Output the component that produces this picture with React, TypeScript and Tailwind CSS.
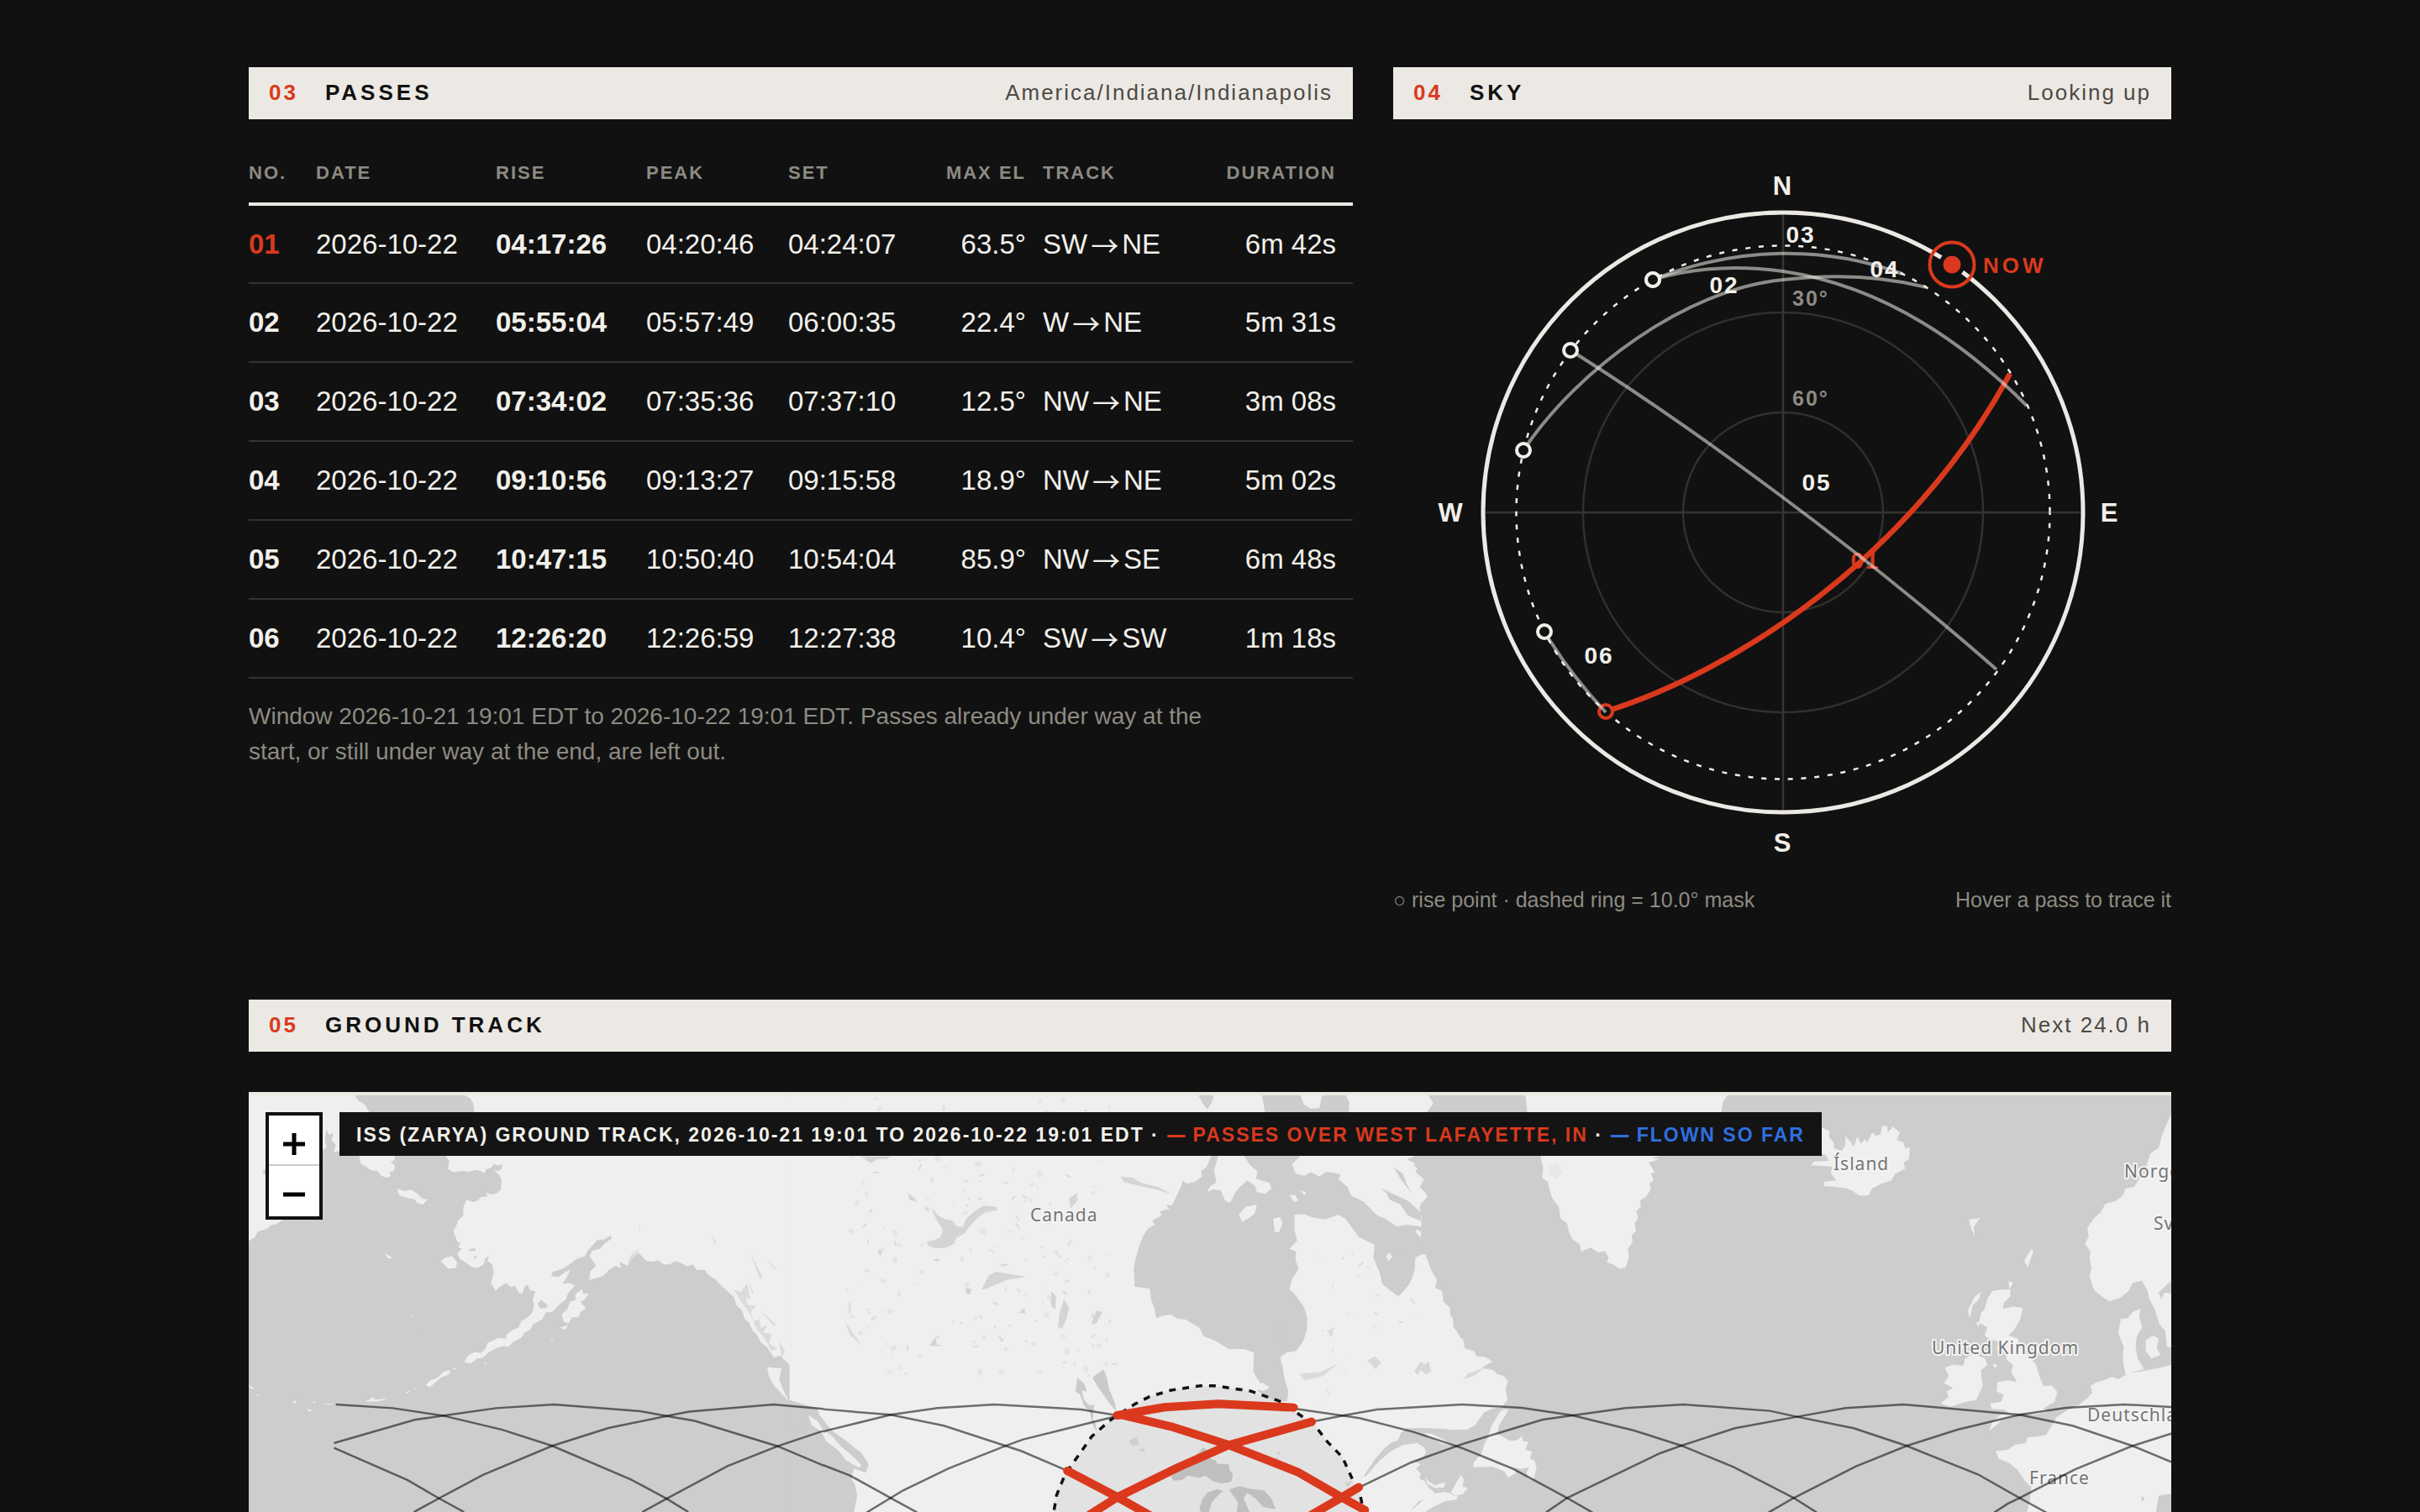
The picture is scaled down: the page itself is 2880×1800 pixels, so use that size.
import type { ReactNode } from "react";

const passes = [
    { no: "01", date: "2026-10-22", rise: "04:17:26", peak: "04:20:46", set: "04:24:07", maxEl: "63.5°", from: "SW", to: "NE", duration: "6m 42s" },
    { no: "02", date: "2026-10-22", rise: "05:55:04", peak: "05:57:49", set: "06:00:35", maxEl: "22.4°", from: "W", to: "NE", duration: "5m 31s" },
    { no: "03", date: "2026-10-22", rise: "07:34:02", peak: "07:35:36", set: "07:37:10", maxEl: "12.5°", from: "NW", to: "NE", duration: "3m 08s" },
    { no: "04", date: "2026-10-22", rise: "09:10:56", peak: "09:13:27", set: "09:15:58", maxEl: "18.9°", from: "NW", to: "NE", duration: "5m 02s" },
    { no: "05", date: "2026-10-22", rise: "10:47:15", peak: "10:50:40", set: "10:54:04", maxEl: "85.9°", from: "NW", to: "SE", duration: "6m 48s" },
    { no: "06", date: "2026-10-22", rise: "12:26:20", peak: "12:26:59", set: "12:27:38", maxEl: "10.4°", from: "SW", to: "SW", duration: "1m 18s" },
];

// Sky positions, relative to the zenith. Horizon radius is 357.
const arcs = [
    { no: "02", label: [-70, -261], start: [-309, -74], d: "M-309-74C-245-170-115-266 0-277C60-284 120-281 170-268" },
    { no: "03", label: [21, -321], start: [-155, -277], d: "M-155-277C-55-317 50-318 142-284" },
    { no: "04", label: [121, -280], start: [-155, -277], d: "M-155-277C-105-292-50-294 0-287C110-271 205-212 290-127" },
    { no: "05", label: [40, -26], start: [-253, -193], d: "M-253-193C-110-103 90 43 254 187" },
    { no: "06", label: [-219, 180], start: [-284, 142], d: "M-284 142Q-254 192-211 238" },
];

function SectionBar({ no, title, note }: { no: string; title: string; note: string }) {
    return (
        <header className="flex h-[62px] items-start bg-[#ece9e4] px-6 py-3 text-[26px] leading-9 text-[#111111]">
            <span className="mr-8 font-bold tracking-[3px] text-[#da391d]">{no}</span>
            <h2 className="font-bold tracking-[4px]">{title}</h2>
            <span className="ml-auto tracking-[2px] text-[#4d4a45]">{note}</span>
        </header>
    );
}

function PassTable() {
    return (
        <table className="mt-[44px] w-full table-fixed border-collapse text-left whitespace-nowrap">
            <colgroup>
                <col className="w-[80px]" />
                <col className="w-[214px]" />
                <col className="w-[179px]" />
                <col className="w-[169px]" />
                <col className="w-[165px]" />
                <col className="w-[138px]" />
                <col className="w-[200px]" />
                <col className="w-[169px]" />
            </colgroup>
            <thead>
                <tr className="h-[57px] border-b-4 border-[#ece9e4] align-top text-[22px] leading-10 tracking-[2px] text-[#8d8b82]">
                    <th scope="col">NO.</th>
                    <th scope="col">DATE</th>
                    <th scope="col">RISE</th>
                    <th scope="col">PEAK</th>
                    <th scope="col">SET</th>
                    <th scope="col" className="pr-5 text-right">MAX EL</th>
                    <th scope="col">TRACK</th>
                    <th scope="col" className="pr-5 text-right">DURATION</th>
                </tr>
            </thead>
            <tbody className="text-[33px] leading-10">
                {passes.map((pass, i) => (
                    <tr key={pass.no} className="h-[94px] border-b-2 border-[#333331]">
                        <th scope="row" className={i === 0 ? "font-bold text-[#da391d]" : "font-bold"}>{pass.no}</th>
                        <td>{pass.date}</td>
                        <td className="font-bold">{pass.rise}</td>
                        <td>{pass.peak}</td>
                        <td>{pass.set}</td>
                        <td className="pr-5 text-right">{pass.maxEl}</td>
                        <td>
                            <span className="flex items-center gap-1">
                                {pass.from}
                                <span className="font-['Noto_Sans_CJK_JP']">→</span>
                                {pass.to}
                            </span>
                        </td>
                        <td className="pr-5 text-right">{pass.duration}</td>
                    </tr>
                ))}
            </tbody>
        </table>
    );
}

function SkyChart() {
    return (
        <svg viewBox="-421 -420 840 840" className="mx-auto mt-12 block w-full max-w-[840px] overflow-visible" role="img" aria-label="Sky chart">
            <g fill="none" stroke="#30302d" strokeWidth="2.5">
                <circle r="119" />
                <circle r="238" />
                <path d="M-357 0H357M0-357V357" stroke="#353532" />
            </g>
            <circle r="317.5" fill="none" stroke="#f2f0eb" strokeWidth="2.5" strokeDasharray="6 9.8" strokeDashoffset="3" />
            <circle r="357" fill="none" stroke="#ece9e4" strokeWidth="5" />

            <g fill="#8d8b82" className="text-[25px] font-bold tracking-[2px]">
                <text x="11" y="-246">30°</text>
                <text x="11" y="-127">60°</text>
            </g>
            <g fill="#f2f0eb" textAnchor="middle" className="text-[31px] font-bold">
                <text x="-1" y="-378">N</text>
                <text x="388" y="11">E</text>
                <text x="-1" y="404">S</text>
                <text x="-396" y="11">W</text>
            </g>

            <text x="98" y="67" textAnchor="middle" fill="#da391d" className="text-[28px] font-bold tracking-[2px]">01</text>
            <path d="M-211 237C-60 190 150 56 270-165" fill="none" stroke="#da391d" strokeWidth="6.5" />
            <circle cx="-211" cy="237" r="8" fill="#111111" stroke="#da391d" strokeWidth="4" />

            {arcs.map((arc) => (
                <g key={arc.no}>
                    <path d={arc.d} fill="none" stroke="#f2f0eb" strokeOpacity="0.55" strokeWidth="4" />
                    <circle cx={arc.start[0]} cy={arc.start[1]} r="8" fill="#111111" stroke="#f2f0eb" strokeWidth="4" />
                </g>
            ))}
            {arcs.map((arc) => (
                <text key={arc.no} x={arc.label[0]} y={arc.label[1]} textAnchor="middle" fill="#f2f0eb" className="text-[28px] font-bold tracking-[2px]">{arc.no}</text>
            ))}

            <circle cx="201" cy="-295" r="26.5" fill="none" stroke="#da391d" strokeWidth="4" />
            <circle cx="201" cy="-295" r="13" fill="#da391d" stroke="#111111" strokeWidth="5" />
            <text x="238" y="-285" fill="#da391d" className="text-[26px] font-bold tracking-[4px]">NOW</text>
        </svg>
    );
}

// Each sheet of the base map is digitised on its own grid.
const SHEET_WEST = "translate(-16 -140) scale(0.4464 0.4082)";
const SHEET_CANADA = "translate(664 -20) scale(0.5102 0.3333)";
const SHEET_ATLANTIC = "translate(1444 -20) scale(0.5483 0.3333)";
const SHEET_GULF = "translate(1324 300) scale(0.3333)";
const SHEET_LAKES = "translate(884 340) scale(0.3333)";

// Small lakes scattered over the Canadian shield
const ponds = Array.from({ length: 190 }, (_, i) => {
    const rx = (Math.sin(i * 12.9898) * 43758.5453) % 1;
    const ry = (Math.sin(i * 78.233) * 12543.123) % 1;
    return {
        x: Math.round(710 + Math.abs(rx) * 320),
        y: Math.round(8 + Math.abs(ry) * 330),
        w: 1 + ((i * 7) % 3),
        h: 1 + ((i * 5) % 4),
        turn: (i * 37) % 180,
    };
}).concat(
    Array.from({ length: 50 }, (_, i) => ({
        x: Math.round(1268 + Math.abs((Math.sin(i * 4.1414) * 9631.77) % 1) * 150),
        y: Math.round(190 + Math.abs((Math.sin(i * 9.73) * 7753.31) % 1) * 190),
        w: 1 + ((i * 3) % 3),
        h: 1 + ((i * 5) % 4),
        turn: (i * 53) % 180,
    })),
);

function Track({ points }: { points: string }) {
    return <polyline points={points} vectorEffect="non-scaling-stroke" />;
}

function BaseMap() {
    return (
        <g>
            <g transform={SHEET_WEST} fill="#efefef">
                <path d="M36 352H318L330 370 344 378 352 392 358 402 300 470 278 515 262 518 268 498 256 482 263 462 250 468 243 452 239 485 243 505 233 512 190 680 150 710 128 715 110 728 95 732 84 742 60 750 52 766 36 778Z" />
                <path d="M330 529H426L424 542 414 548 426 558 423 574 412 576 414 590 400 592 388 586 380 574 360 570 348 560 335 553Z" />
                <path d="M610 352 625 360 634 375 637 402V500L562 529 570 545 567 568 580 577 602 573 622 576 640 570 654 573 664 580 670 568 684 562 688 553 703 558 711 552 711 566 700 574 688 571 704 584 710 600 708 628 698 638 680 642 669 636 672 648 655 650 645 661 632 664 616 657 608 680 608 704 594 718 588 736 581 748 586 762 592 780 600 782 594 795 604 800 592 815 600 832 612 838 630 854 645 856 662 846 666 830 676 820 672 836 685 846 689 870 682 900 694 923 704 912 722 900 735 912 745 908 756 928 765 932 770 914 778 904 786 920 800 925 793 950 797 968 790 990 775 1003 762 1012 755 1030 740 1036 724 1050 722 1062 700 1060 690 1066 672 1075 668 1090 655 1104 638 1102 620 1112 610 1132 628 1134 645 1120 660 1118 676 1102 696 1090 712 1084 728 1086 744 1070 762 1060 772 1044 786 1036 795 1020 818 1006 828 986 845 984 866 960 880 950 887 930 905 908 893 900 872 902 884 884 893 862 880 868 862 882 842 880 846 868 872 858 888 848 910 830 932 822 938 808 964 776 985 772 1000 762 1004 770 984 786 972 800 952 806 944 822 954 836 962 850 946 866 944 892 960 886 980 880 996 862 1012 850 1030 856 1024 838 1046 850 1060 828 1076 812 1096 836 1112 838 1128 834 1142 846 1158 846 1172 836 1190 842 1204 852 1220 846 1230 862 1252 862 1260 875 1280 890 1300 912 1330 942 1336 966 1350 978 1358 1004 1370 1016 1380 1040 1392 1052 1400 1072 1420 1090 1436 1118 1452 1112 1470 1130 1482 1142 1490 1176 1512 1200 1530 1225 1545 1234 1562 1268 1600 1300V352Z" />
                <path d="M1418 1145 1456 1149 1450 1180 1462 1215 1476 1246 1456 1222 1434 1196 1422 1170Z" />
                <path d="M870 992 886 975 893 955 908 950 906 934 924 918 928 932 942 930 932 948 920 955 935 975 920 985 915 1000 898 1000 888 1018 876 1014Z" />
                <path d="M431 624 450 632 468 628 486 640 498 654 513 656 500 671 484 666 478 656 460 652 438 645Z" />
                <path d="M547 836 560 826 578 822 592 840 588 856 568 858Z" />
                <path d="M398 814 410 820 420 828 408 828ZM508 1198 520 1184 540 1176 556 1158 574 1154 570 1166 548 1176 534 1190 518 1204ZM345 1246 358 1240 366 1232 372 1240 405 1237 388 1244 366 1246ZM36 1198 52 1207 40 1208ZM152 1246 165 1242 158 1252ZM190 1268 206 1270 198 1275ZM205 1248 216 1246 210 1251ZM236 1252 262 1252 250 1255ZM455 1218 466 1214 460 1222ZM476 1206 486 1208 480 1211ZM580 1150 592 1145 586 1152ZM866 1030 888 1022 878 1036ZM470 996 475 996 473 1000ZM486 1024 492 1028 488 1028ZM842 1062 848 1064 844 1068ZM56 1226 66 1226 60 1230ZM730 1098 752 1108 740 1102ZM662 1132 672 1134 666 1137Z" />
                <g fill="#cdcdcd">
                    <path d="M74 570 86 568 86 582 76 584ZM806 960 816 950 834 965 826 974 812 974ZM622 802 640 798 640 806 626 808ZM636 824 642 820 642 832Z" />
                    <path d="M1045 850 1052 825 1066 800 1060 820 1076 798 1070 826 1054 850ZM1330 920 1348 926 1364 900 1374 950 1360 940 1366 964 1388 966 1374 985 1382 1012 1396 1005 1402 1030 1418 1022 1408 1044 1430 1050 1424 1076 1446 1092 1430 1098 1410 1060 1388 1030 1372 990 1346 950ZM1366 886 1382 932 1378 934ZM1268 762 1284 782 1280 786ZM1372 810 1386 840 1406 884 1398 888 1386 850ZM1410 820 1442 860 1438 862ZM1398 976 1440 1020 1436 1026ZM1450 1070 1466 1100 1456 1118ZM1078 732 1080 748 1076 748Z" opacity=".6" />
                </g>
            </g>

            <g transform={SHEET_CANADA}>
                <path fill="#efefef" d="M-40 72H1450L1462 100 1448 130 1420 288 1400 300 1428 322 1420 345 1446 380 1440 410 1450 440 1430 470 1440 560 1436 600 1446 650 1458 700 1470 730 1466 760 1482 770 1486 810 1500 830 1502 860 1512 870 1508 900 1528 930 1536 962H1290V1562H110L118 1500 112 1460 104 1440 110 1405 138 1420 145 1390 128 1350 95 1310 60 1270 30 1215 25 1190 -40 1160Z" />
                <path fill="#efefef" d="M4 1214 24 1232 36 1262 60 1290 80 1326 104 1356 128 1392 122 1402 92 1376 74 1340 46 1308 34 1272 12 1250Z" />
                <g fill="#cdcdcd">
                    <path d="M-40 1162 0 1200 22 1220 20 1232 2 1208 -40 1200ZM-40 1240 34 1276 44 1310 72 1345 92 1380 108 1400 104 1444 114 1500 108 1562H-40Z" />
                    <path d="M914 72H950L944 100 934 122 922 96ZM1062 72H1156L1160 104 1176 120 1196 116 1202 72H1258L1266 96 1264 140H1070Z" />
                    <path d="M944 288 932 330 920 340 922 362 905 382 886 388 878 376 872 402 860 440 852 466 838 462 846 478 824 486 828 500 806 520 812 534 796 548 785 574 776 610 768 650 763 690 765 755 800 762 804 806 811 828 815 868 832 858 850 855 866 870 884 872 900 888 915 900 926 932 950 946 985 978 1020 978 1043 990 1042 1060 1060 1106 1052 1128 1070 1150 1088 1158 1120 1166 1124 1130 1114 1080 1110 1040 1104 1008 1120 990 1142 985 1158 950 1166 915 1168 866 1160 828 1140 785 1126 765 1132 730 1148 690 1140 660 1142 630 1126 620 1144 592 1138 555 1138 498 1160 496 1180 508 1210 515 1240 498 1256 512 1280 560 1288 578 1325 606 1322 650 1338 712 1342 745 1362 770 1380 790 1394 768 1408 740 1418 700 1420 650 1436 640H1460V560L1430 540 1400 534 1376 540 1350 512 1330 500 1300 452 1270 430 1262 400 1240 372 1246 354 1212 344 1196 362 1176 346 1160 360 1140 350 1132 318 1152 288H1020L1034 320 1052 345 1048 370 1080 385 1084 405 1070 424 1050 418 1046 395 1028 376 1010 400 998 424 988 456 976 448 966 412 948 408 934 418 942 396 956 384 950 340 960 288Z" />
                    <path d="M1338 402 1352 420 1360 445 1385 462 1402 500 1430 520 1440 500 1404 450 1376 430ZM1370 330 1390 350 1400 390 1410 420 1385 370ZM1440 288H1580V1010L1536 962 1510 900 1502 830 1486 770 1470 730 1446 650 1434 560 1432 460 1452 430 1430 400 1444 360 1416 320Z" />
                    <path d="M290 470 306 500 320 512 340 520 350 540 365 542 372 512 392 486 412 466 442 470 444 482 420 486 402 505 380 540 368 566 350 580 345 600 326 616 300 618 284 610 280 595 296 590 312 578 318 552 304 520ZM126 290H196L186 300 165 300 150 314 136 300ZM408 766 424 716 440 702 466 708 512 720 470 730 450 742 420 762ZM370 756 385 766 380 784 372 780ZM732 362 760 366 780 384 820 400 850 424 820 410 780 396 740 382ZM612 440 632 420 628 455 616 474ZM236 420 252 440 258 452 240 445ZM586 900 590 850 600 800 612 830 606 870 596 906ZM570 770 582 790 580 836 570 826ZM664 890 676 840 690 846 676 886ZM494 850 508 832 510 850ZM164 630 176 628 172 646ZM292 660 312 654 306 666ZM445 925 458 945 464 928 456 955ZM286 966 300 936 304 962 320 968Z" opacity=".8" />
                    <path d="M90 880 108 920 132 978 118 950 100 926ZM1095 900 1106 880 1118 930 1100 944ZM1302 1430 1330 1374 1380 1310 1336 1384ZM1150 1066 1200 1060 1240 1030 1202 1076 1160 1090ZM1304 1010 1326 985 1346 1020 1320 1040ZM1420 1050 1440 1010 1452 1040 1430 1078ZM1214 915 1230 900 1226 930Z" opacity=".6" />
                </g>
                <path fill="#efefef" d="M1008 498 1024 470 1050 462 1046 492 1030 512 1016 524ZM1088 512 1104 506 1110 530 1102 560 1092 560ZM1126 428 1140 428 1146 448 1136 452ZM1150 410 1164 418 1162 430ZM1352 645 1360 632 1366 650 1356 664ZM1424 550 1434 560 1432 580 1420 560ZM1152 72H1202L1196 106 1180 116 1160 104ZM1048 1104 1064 1098 1080 1116 1064 1128 1050 1120Z" />
            </g>

            <g fill="#d4d4d4">
                {ponds.map((p, i) => (
                    <ellipse key={i} cx={p.x} cy={p.y} rx={p.w} ry={p.h} opacity={i % 3 === 0 ? 0.8 : 0.4} transform={`rotate(${p.turn} ${p.x} ${p.y})`} />
                ))}
            </g>

            <g transform={SHEET_ATLANTIC} fill="#efefef">
                <path d="M138 72H575L566 96 562 140 430 288 412 296 428 300 405 312 418 345 410 352 416 376 406 386 410 408 398 436 386 448 388 470 378 486 382 510 374 530 378 556 368 572 370 596 360 620 362 650 355 686 342 692 328 676 314 668 318 650 310 628 296 634 280 616 270 622 258 630 256 606 240 586 232 560 228 530 214 512 210 470 196 440 190 410 186 380 174 368 176 330 170 288 145 200Z" />
                <path d="M778 184 798 200 796 220 806 240 808 262 824 270 832 250 832 218 844 240 850 256 858 220 866 245 874 228 880 240 890 204 898 216 908 212 912 182 922 180 924 205 935 184 950 205 944 232 958 240 962 262 972 258 970 300 958 312 962 334 940 352 932 376 912 386 890 404 882 430 862 430 846 412 834 404 810 398 785 396 786 380 812 376 800 350 804 326 758 322 764 308 796 306 790 286 766 274 750 266 768 248 758 216 776 212Z" />
                <path d="M1539 140 1520 210 1512 260 1494 280 1486 320 1492 350 1470 370 1458 400 1440 404 1434 430 1418 450 1396 460 1386 490 1372 510 1357 545 1360 575 1352 602 1364 630 1362 655 1366 690 1362 720 1372 768 1390 792 1405 808 1428 796 1446 772 1456 742 1475 734 1488 770 1492 800 1504 838 1514 890 1526 912 1530 970 1539 972Z" />
                <path d="M1539 1034 1510 1046 1480 1056 1445 1065 1425 1086 1410 1078 1398 1086 1376 1098 1364 1110 1368 1135 1354 1158 1340 1176 1310 1200 1290 1222 1280 1250 1268 1284 1250 1290 1226 1294 1224 1314 1200 1320 1184 1338 1158 1342 1164 1368 1190 1388 1206 1410 1222 1450 1236 1470 1232 1520 1226 1562H1506L1512 1502 1539 1494Z" />
                <path d="M1430 870 1445 868 1456 845 1472 834 1470 862 1476 900 1464 935 1462 970 1466 1010 1480 1050 1440 1068 1434 1020 1436 970 1424 920ZM1484 946 1500 930 1512 940 1508 975 1516 1000 1496 1012 1484 985Z" />
                <path d="M1150 772 1168 766 1190 765 1190 790 1176 812 1174 834 1196 826 1217 832 1212 870 1200 905 1186 930 1206 940 1214 985 1232 1005 1246 1034 1252 1070 1262 1110 1280 1108 1292 1132 1286 1166 1262 1190 1274 1202 1240 1212 1214 1206 1198 1222 1172 1232 1156 1254 1144 1272 1150 1240 1168 1212 1188 1206 1176 1194 1150 1192 1146 1172 1170 1166 1176 1140 1160 1130 1162 1096 1186 1090 1204 1096 1192 1060 1196 1036 1180 1012 1186 990 1160 982 1166 952 1148 946 1134 930 1140 900 1122 884 1126 850 1134 836 1140 800Z" />
                <path d="M1048 1044 1066 1034 1088 1038 1092 1012 1110 996 1134 1010 1140 1034 1126 1056 1130 1110 1116 1160 1090 1168 1060 1184 1038 1172 1056 1150 1052 1130 1066 1116 1046 1100 1056 1074Z" />
                <path d="M1100 516 1124 510 1110 544 1114 576 1106 552ZM1236 620 1240 628 1228 686 1220 662ZM1186 734 1196 742 1188 764ZM1112 792 1126 774 1122 800 1108 822 1102 868 1098 840ZM1116 884 1126 880 1120 900ZM1152 1030 1162 1036 1156 1048Z" />
                <g fill="#cdcdcd">
                    <path d="M1512 776 1528 750 1539 735V780L1524 776 1518 800ZM1352 1090 1358 1120 1350 1146ZM1474 1504 1482 1510 1476 1524Z" />
                    <path d="M186 320 206 316 220 345 204 372 190 352Z" opacity=".2" />
                </g>
            </g>

            <g transform={SHEET_GULF} fill="#efefef">
                <path fill="#cdcdcd" d="M130 120H900V600H0V470L60 380H130Z" />
                <path d="M-20-20H362L370 16 404 26 412 44 440 46 470 62 440 78 432 88 470 92 486 108 508 114 524 132 516 160 522 200 502 225 470 230 440 244 420 270 405 292 375 306 320 307 300 303 220 300 160 301 142 318 130 345 110 350 80 375 50 410 10 470-20 490Z" />
                <path d="M-20 490 10 472 30 455 64 418 104 384 150 360 200 354 224 368 232 386 222 402 190 420 212 430 196 445 212 462 208 480 226 490 240 512 262 530 240 550 205 562 190 580 172 602H-20Z" />
                <path d="M170 602 204 572 240 540 262 534 300 528 345 545 340 556 300 562 260 580 225 602ZM320 532 336 500 356 468 366 484 362 508 380 516 362 536 340 542ZM228 474 240 490 262 504 300 494 296 512 262 514 236 500ZM225 318 256 322 300 344 326 362 290 358 246 336Z" />
                <path d="M500 236 526 234 510 262 492 290 486 322 510 334 532 346 556 344 574 328 576 346 596 350 586 378 610 384 602 408 618 416 626 440 616 482 598 484 590 462 600 440 572 446 546 442 552 462 524 478 512 456 470 438 400 440 402 422 428 394 438 362 452 334 466 290Z" />
                <path fill="#cdcdcd" d="M366 126 380 106 404 98 440 84 430 92 408 110 384 120ZM190 96 212 64 228 74 240 60 250 98 230 108 212 92 200 112ZM22 60 48 44 72 66 50 90 36 72Z" opacity=".7" />
                <path fill="#cdcdcd" d="M12 468 34 436 62 398 96 366 130 346 140 352 104 382 64 416 34 452 14 474Z" />
            </g>

            <g transform={SHEET_LAKES} fill="#cacaca">
                <path d="M360 0 400-30 412 0 420 40 440 90 446 122 424 96 402 64 384 40ZM306 0 330 20 340 50 322 46 330 80 350 100 366 96 362 150 372 168 378 196 362 172 350 120 330 100 316 60 300 50Z" />
                <path d="M640 352 700 316 728 278 756 250 780 264 770 286 800 296 806 308 846 308 850 330 862 344 856 372 820 378 790 370 764 350 742 358 700 350 680 366 650 368Z" />
                <path d="M742 470 752 436 772 410 806 398 826 404 806 424 786 446 776 482H748ZM848 400 886 388 930 398 972 402 1000 432 1014 470 970 462 940 430 914 412 900 430 922 482H876L880 446Z" />
                <path d="M490 226 520 210 528 240 504 246ZM526 262 540 250 550 266ZM1020 260 1036 270 1024 276ZM1010 290 1024 284 1026 300ZM706 200 716 206 712 214ZM1260 374 1290 370 1270 392Z" opacity=".5" />
            </g>
        </g>
    );
}

function GroundMap() {
    return (
        <svg viewBox="0 4 2288 496" preserveAspectRatio="xMidYMin slice" className="block h-full w-full" role="img" aria-label="ISS ground track map">
            <rect width="2288" height="500" fill="#cdcdcd" />
            <BaseMap />

            <g fill="#757575" stroke="#f4f4f4" strokeWidth="4" strokeLinejoin="round" paintOrder="stroke" className="font-['Noto_Sans'] text-[21px] tracking-[1px]">
                <text x="930" y="154">Canada</text>
                <text x="1886" y="93">Ísland</text>
                <text x="2232" y="102">Norge</text>
                <text x="2267" y="164">Sverige</text>
                <text x="2003" y="312">United Kingdom</text>
                <text x="2188" y="392">Deutschland</text>
                <text x="2119" y="467">France</text>
            </g>

            <g fill="none" stroke="#000000" strokeOpacity="0.55" strokeWidth="2.5">
                <g transform={SHEET_WEST}>
                    <Track points="268,1254 420,1265 555,1287 712,1328 845,1375 1055,1473 1150,1529 1208,1568" />
                    <Track points="263,1367 478,1299 555,1287 695,1265 850,1254 1080,1274 1150,1288 1225,1302 1446,1376 1568,1432" />
                    <Track points="263,1381 460,1475 543,1528 610,1568" />
                    <Track points="476,1568 543,1528 660,1460 845,1375 995,1323 1150,1288 1210,1275 1435,1254 1568,1267" />
                    <Track points="1085,1568 1150,1529 1312,1434 1446,1376 1568,1331" />
                </g>
                <g transform={SHEET_CANADA}>
                    <Track points="39,1393 100,1429 196,1510 258,1562" />
                    <Track points="39,1193 196,1213 320,1252 500,1342 608,1413" />
                    <Track points="39,1273 50,1268 196,1213 305,1189 438,1176 640,1194 728,1216" />
                    <Track points="140,1562 196,1510 225,1483 330,1405 462,1325 505,1301 728,1216" />
                    <Track points="1142,1192 1250,1216 1290,1225 1415,1274 1516,1325 1529,1332" />
                    <Track points="1182,1237 1250,1216 1330,1194 1529,1176" />
                    <Track points="1292,1470 1410,1383 1516,1325 1529,1318" />
                </g>
                <g transform={SHEET_ATLANTIC}>
                    <Track points="0,1176 130,1188 240,1215 375,1270 476,1323 590,1400 720,1510 770,1562" />
                    <Track points="0,1318 175,1230 240,1215 355,1189 480,1176 668,1199 727,1220 850,1261 965,1324 1120,1426 1210,1510 1268,1562" />
                    <Track points="0,1332 110,1405 228,1510 283,1562" />
                    <Track points="182,1562 228,1510 430,1350 476,1323 592,1261 727,1220 832,1189 958,1176 1210,1213 1325,1252 1455,1324 1539,1381" />
                    <Track points="665,1562 720,1510 855,1397 965,1324 1075,1266 1210,1213 1310,1188 1437,1176 1539,1185" />
                    <Track points="1155,1562 1185,1530 1210,1510 1330,1408 1455,1324 1539,1280" />
                </g>
            </g>

            <g transform={SHEET_CANADA} fill="none">
                <polyline
                    points="572,1600 583,1500 603,1425 640,1345 665,1290 710,1230 765,1175 800,1148 850,1125 920,1109 950,1109 1035,1128 1110,1168 1150,1213 1185,1250 1215,1310 1250,1365 1275,1450 1290,1490 1304,1600"
                    vectorEffect="non-scaling-stroke" fill="#000000" fillOpacity="0.05" stroke="#111111" strokeWidth="3.5" strokeDasharray="8 8" strokeLinejoin="round"
                />
                <g stroke="#da391d" strokeWidth="10" strokeLinecap="round" strokeLinejoin="round">
                    <Track points="608,1413 725,1507 800,1572" />
                    <Track points="724,1215 835,1186 960,1174 1136,1187" />
                    <Track points="735,1213 850,1255 985,1321 1145,1417 1248,1508 1302,1553" />
                    <Track points="660,1570 725,1507 865,1402 985,1321 1178,1238" />
                    <Track points="1176,1572 1248,1508 1288,1472" />
                </g>
            </g>
        </svg>
    );
}

function ZoomButton({ label, children }: { label: string; children: ReactNode }) {
    return (
        <button type="button" aria-label={label} className="flex h-[60px] w-[60px] items-center justify-center bg-white pt-2 text-black">
            <svg viewBox="0 0 26 26" className="size-[26px]" stroke="currentColor" strokeWidth="5">
                {children}
            </svg>
        </button>
    );
}

function Dash() {
    return <span className="font-['Open_Sans'] font-extrabold tracking-normal">—</span>;
}

export default function App() {
    return (
        <div className="flex h-screen flex-col overflow-hidden bg-[#111111] pt-20 font-['Liberation_Sans',Arial,sans-serif] text-[#f2f0eb]">
            <main className="mx-auto flex min-h-0 w-full max-w-[2288px] flex-1 flex-col">
                <div className="grid grid-cols-[1314fr_926fr] gap-12">
                    <section>
                        <SectionBar no="03" title="PASSES" note="America/Indiana/Indianapolis" />
                        <PassTable />
                        <p className="mt-6 max-w-[1180px] text-[28px] leading-[42px] text-[#8d8b82]">
                            Window 2026-10-21 19:01 EDT to 2026-10-22 19:01 EDT. Passes already under way at the start, or still under way at the end, are left out.
                        </p>
                    </section>

                    <section>
                        <SectionBar no="04" title="SKY" note="Looking up" />
                        <SkyChart />
                        <div className="mt-5 flex justify-between text-[25px] leading-[42px] text-[#8d8b82]">
                            <span>○ rise point · dashed ring = 10.0° mask</span>
                            <span>Hover a pass to trace it</span>
                        </div>
                    </section>
                </div>

                <section className="mt-[98px] flex min-h-0 flex-1 flex-col">
                    <SectionBar no="05" title="GROUND TRACK" note="Next 24.0 h" />
                    <div className="relative mt-12 min-h-0 flex-1 border-t-4 border-[#ece9e4]">
                        <GroundMap />
                        <div className="absolute top-5 left-5 flex items-start gap-5">
                            <div className="border-4 border-[#111111]">
                                <div className="h-[60px] overflow-hidden border-b-2 border-[#cccccc]">
                                    <ZoomButton label="Zoom in"><path d="M0 13H26M13 0V26" /></ZoomButton>
                                </div>
                                <ZoomButton label="Zoom out"><path d="M0 13H26" /></ZoomButton>
                            </div>
                            <p className="h-[52px] bg-[#141414] px-5 text-[23px] leading-[52px] font-bold tracking-[2px] whitespace-nowrap">
                                ISS (ZARYA) GROUND TRACK, 2026-10-21 19:01 TO 2026-10-22 19:01 EDT · <span className="text-[#da391d]"><Dash /> PASSES OVER WEST LAFAYETTE, IN</span> · <span className="text-[#2f6fe0]"><Dash /> FLOWN SO FAR</span>
                            </p>
                        </div>
                    </div>
                </section>
            </main>
        </div>
    );
}
